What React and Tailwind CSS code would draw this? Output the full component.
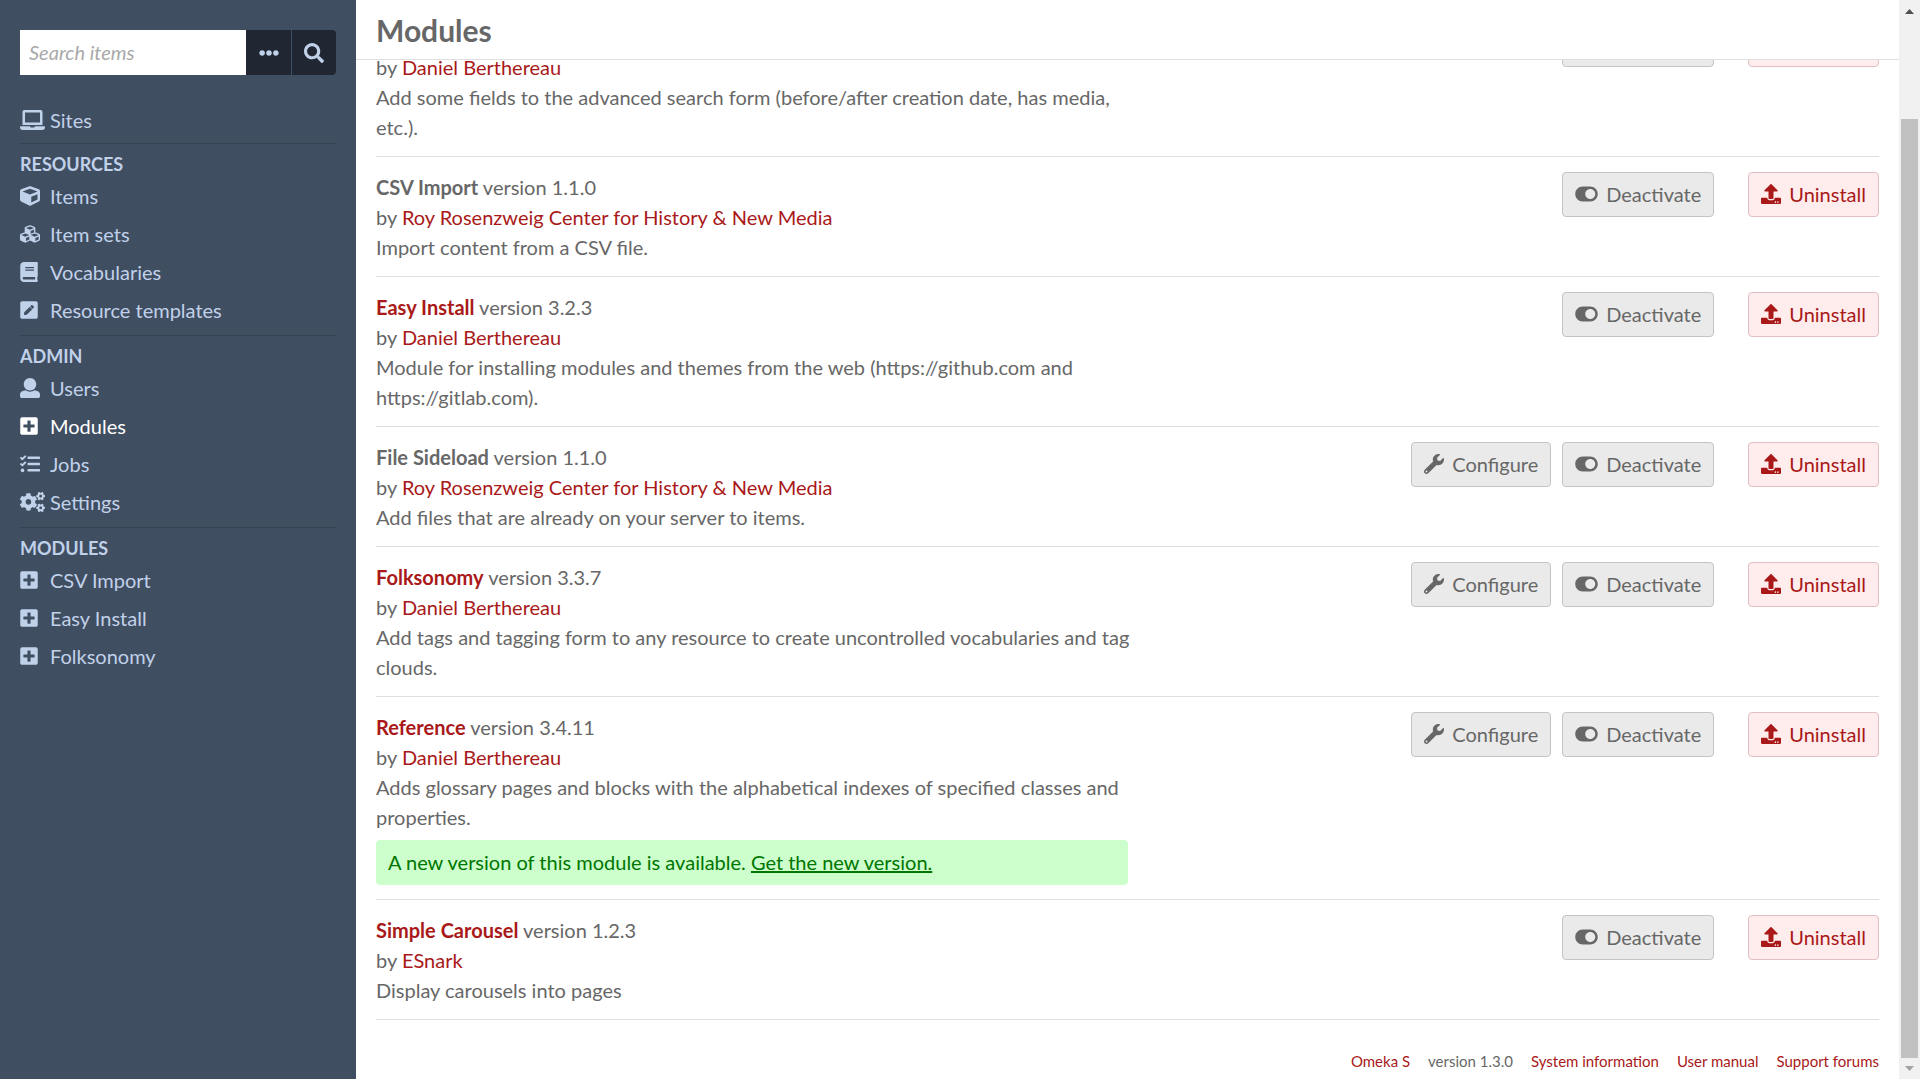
import {
  FaLaptop, FaCube, FaCubes, FaBook, FaPenSquare, FaPlusSquare, FaTasks, FaCogs,
  FaWrench, FaUpload, FaToggleOn, FaSearch, FaEllipsisH,
} from "react-icons/fa";

function UserIcon({ className }) {
  return (
    <svg viewBox="0 0 512 512" fill="currentColor" width="1em" height="1em" className={className} aria-hidden="true">
      <path d="M256 0c88.366 0 160 71.634 160 160s-71.634 160-160 160S96 248.366 96 160 167.634 0 256 0zm183.283 333.821l-71.313-17.828c-74.923 53.89-165.738 41.864-223.94 0l-71.313 17.828C29.981 344.505 0 382.903 0 426.955V464c0 26.510 21.490 48 48 48h416c26.510 0 48-21.490 48-48v-37.045c0-44.052-29.981-82.450-72.717-93.134z" />
    </svg>
  );
}

const SQUARE = "h-5 w-[18px]";
const REGULAR = "h-5 w-5";
const WIDE = "h-5 w-[25px]";

const groups = [
  { items: [{ label: "Sites", Icon: FaLaptop, size: WIDE }] },
  {
    title: "Resources",
    items: [
      { label: "Items", Icon: FaCube, size: REGULAR },
      { label: "Item sets", Icon: FaCubes, size: REGULAR },
      { label: "Vocabularies", Icon: FaBook, size: SQUARE },
      { label: "Resource templates", Icon: FaPenSquare, size: SQUARE },
    ],
  },
  {
    title: "Admin",
    items: [
      { label: "Users", Icon: UserIcon, size: REGULAR },
      { label: "Modules", Icon: FaPlusSquare, size: SQUARE, active: true },
      { label: "Jobs", Icon: FaTasks, size: REGULAR },
      { label: "Settings", Icon: FaCogs, size: WIDE },
    ],
  },
  {
    title: "Modules",
    items: [
      { label: "CSV Import", Icon: FaPlusSquare, size: SQUARE },
      { label: "Easy Install", Icon: FaPlusSquare, size: SQUARE },
      { label: "Folksonomy", Icon: FaPlusSquare, size: SQUARE },
    ],
  },
];

const RRCHNM = "Roy Rosenzweig Center for History & New Media";

// The first entry is partly scrolled under the page header.
const modules = [
  { scrolled: true, author: "Daniel Berthereau", text: "Add some fields to the advanced search form (before/after creation date, has media, etc.)." },
  { name: "CSV Import", version: "1.1.0", author: RRCHNM, text: "Import content from a CSV file." },
  { name: "Easy Install", linked: true, version: "3.2.3", author: "Daniel Berthereau", text: "Module for installing modules and themes from the web (https://github.com and https://gitlab.com)." },
  { name: "File Sideload", version: "1.1.0", author: RRCHNM, text: "Add files that are already on your server to items.", configurable: true },
  { name: "Folksonomy", linked: true, version: "3.3.7", author: "Daniel Berthereau", text: "Add tags and tagging form to any resource to create uncontrolled vocabularies and tag clouds.", configurable: true },
  { name: "Reference", linked: true, version: "3.4.11", author: "Daniel Berthereau", text: "Adds glossary pages and blocks with the alphabetical indexes of specified classes and properties.", configurable: true, update: true },
  { name: "Simple Carousel", linked: true, version: "1.2.3", author: "ESnark", text: "Display carousels into pages" },
];

function NavGroup({ title, items }) {
  return (
    <section className="border-b border-[#364353] last:border-b-0">
      {title && <h2 className="pt-[5px] text-lg leading-[30px] font-bold uppercase">{title}</h2>}
      <ul className={title ? "flex flex-col gap-[8px] pt-[2px] pb-[10px]" : "pb-[8px]"}>
        {items.map(({ label, Icon, size, active }) => (
          <li key={label}>
            <a href="#" className={active ? "flex items-center leading-[30px] text-white" : "flex items-center leading-[30px]"}>
              <span className="w-[30px] shrink-0"><Icon className={size} /></span>
              {label}
            </a>
          </li>
        ))}
      </ul>
    </section>
  );
}

function Sidebar() {
  return (
    <aside className="w-[356px] shrink-0 bg-[#404e61] px-5 pt-[30px] text-[#c0d1ea]">
      <form className="flex h-[45px]" onSubmit={(e) => e.preventDefault()}>
        <input
          type="text"
          aria-label="Search items"
          placeholder="Search items"
          className="min-w-0 flex-1 bg-white px-[9px] pb-[2px] text-[#676767] outline-none placeholder:text-[#a9a9a9] placeholder:italic"
        />
        <button type="button" aria-label="Advanced search" className="flex w-[45px] items-center justify-center bg-[#202733]">
          <FaEllipsisH />
        </button>
        <button type="submit" aria-label="Search" className="flex w-[45px] items-center justify-center rounded-r border-l border-[#404e61] bg-[#202733]">
          <FaSearch />
        </button>
      </form>
      <nav className="pt-[30px]">
        {groups.map((group, i) => <NavGroup key={i} {...group} />)}
      </nav>
    </aside>
  );
}

const GREY = "rounded border border-[#c4c4c4] bg-[#eaeaea] px-3 pt-[6px] pb-[7px] text-[#676767]";
const RED = "rounded border border-[#e0bfc3] bg-[#ffeded] px-3 pt-[6px] pb-[7px] text-[#a91919]";

function ActionButton({ Icon, iconSize, look, hideLabel, label }) {
  return (
    <button type="button" aria-label={label} className={look}>
      <span className={hideLabel ? "invisible flex items-center gap-2" : "flex items-center gap-2"}>
        <Icon className={iconSize} />
        {label}
      </span>
    </button>
  );
}

function ModuleRow({ name, linked, version, author, text, configurable, update, scrolled }) {
  return (
    <li className="flex items-start justify-between border-b border-[#dfdfdf] pt-[15px] pb-[14px]">
      <div className="w-1/2">
        {scrolled ? (
          <div className="h-[30px]" />
        ) : (
          <p>
            {linked ? <a href="#" className="font-bold text-[#a91919]">{name}</a> : <strong className="font-bold">{name}</strong>} version {version}
          </p>
        )}
        <p>by <a href="#" className="text-[#a91919]">{author}</a></p>
        <p className="-mr-4">{text}</p>
        {update && (
          <p className="mt-2 rounded bg-[#ccffcc] px-3 pt-[7px] pb-[8px] text-[#007600]">
            A new version of this module is available. <a href="#" className="underline">Get the new version.</a>
          </p>
        )}
      </div>
      <div className="flex">
        <div className="flex gap-[11px] pr-[34px]">
          {configurable && <ActionButton Icon={FaWrench} iconSize="size-5" look={GREY} label="Configure" />}
          <ActionButton Icon={FaToggleOn} iconSize="h-5 w-[23px]" look={GREY} hideLabel={scrolled} label="Deactivate" />
        </div>
        <ActionButton Icon={FaUpload} iconSize="size-5" look={RED} hideLabel={scrolled} label="Uninstall" />
      </div>
    </li>
  );
}

function Scrollbar() {
  return (
    <div className="flex w-[21px] shrink-0 flex-col items-center bg-[#f1f1f1]" aria-hidden="true">
      <svg viewBox="0 0 21 21" className="size-[21px]"><path d="M6 14h9l-4.500-5z" fill="#505050" /></svg>
      <div className="mt-[98px] w-[17px] flex-1 bg-[#c1c1c1]" />
      <svg viewBox="0 0 21 21" className="size-[21px]"><path d="M6 8h9l-4.500 5z" fill="#a3a3a3" /></svg>
    </div>
  );
}

export default function App() {
  return (
    <div className="flex min-h-screen bg-white font-['Lato',sans-serif] text-xl leading-[30px] text-[#676767]">
      <Sidebar />
      <main className="flex min-w-0 flex-1 flex-col">
        <header className="z-10 border-b border-[#dfdfdf] bg-white px-5 pt-[15px] pb-[13px]">
          <h1 className="text-3xl leading-[31px] font-bold">Modules</h1>
        </header>
        <div className="overflow-hidden px-5">
          <ul className="-mt-[53px]">
            {modules.map((m) => <ModuleRow key={m.text} {...m} />)}
          </ul>
          <footer className="flex justify-end gap-[18px] pt-[26px] text-[15px]">
            <a href="#" className="text-[#a91919]">Omeka S</a>
            <span>version 1.3.0</span>
            <a href="#" className="text-[#a91919]">System information</a>
            <a href="#" className="text-[#a91919]">User manual</a>
            <a href="#" className="text-[#a91919]">Support forums</a>
          </footer>
        </div>
      </main>
      <Scrollbar />
    </div>
  );
}
